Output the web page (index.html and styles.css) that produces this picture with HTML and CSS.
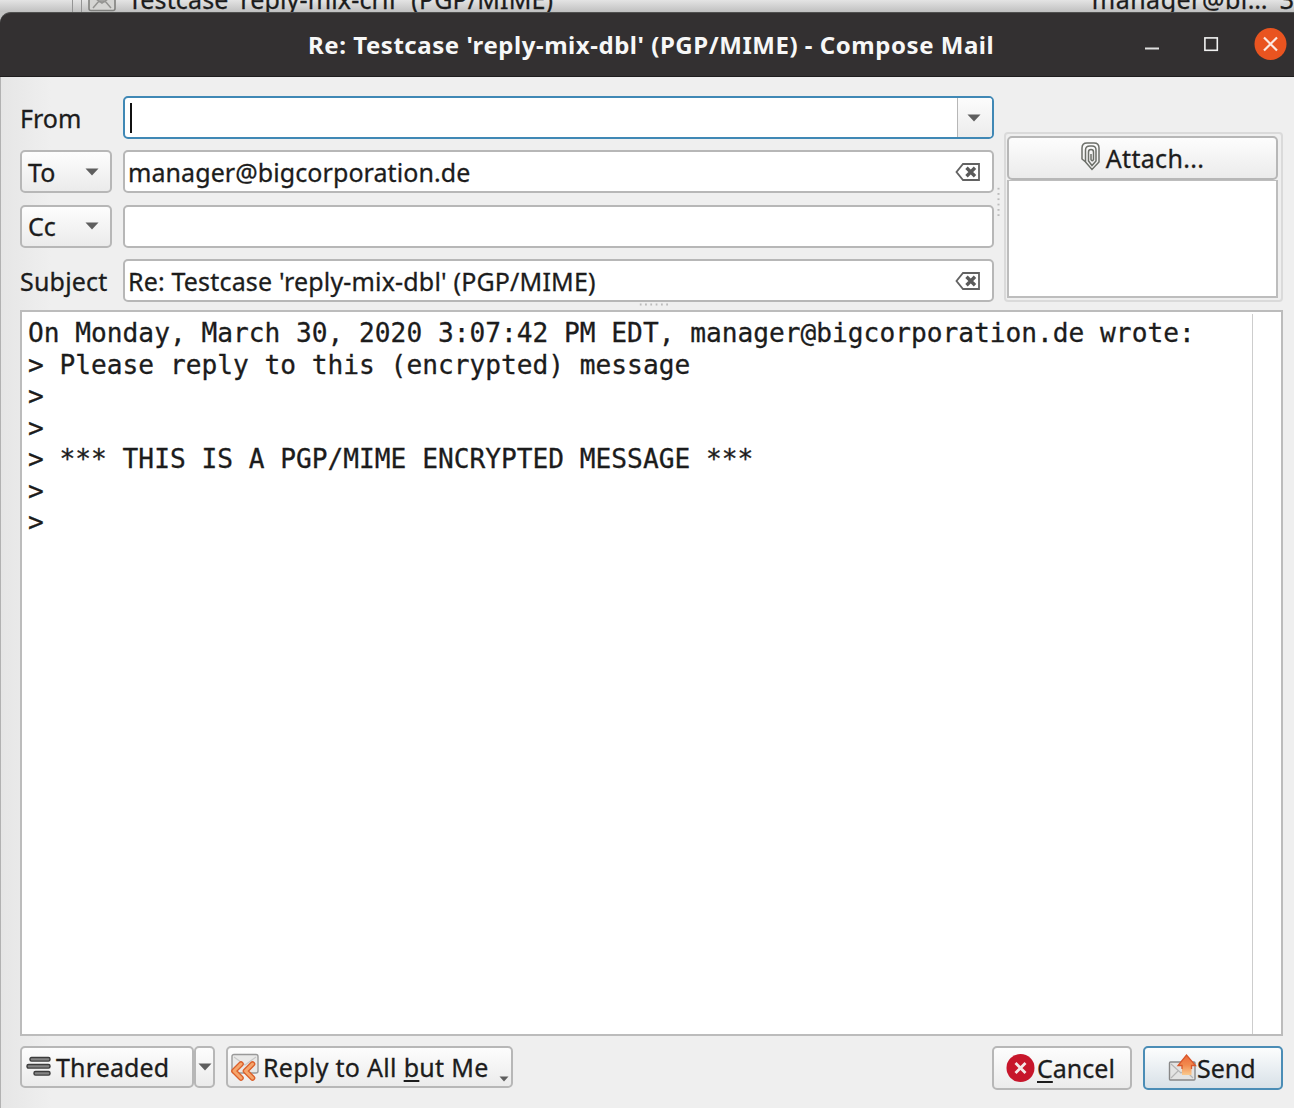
FILE: index.html
```html
<!DOCTYPE html>
<html lang="en">
<head>
<meta charset="utf-8">
<title>Compose Mail</title>
<link rel="stylesheet" href="styles.css">
</head>
<body>
<div class="desktop">
  <div class="backdrop">
    <i class="tree-lines"></i>
    <svg class="mail-icon" width="28" height="12" viewBox="0 0 28 12"><rect x="1" y="-10" width="26" height="20.500" rx="2" fill="#d5d5d3" stroke="#80807e" stroke-width="1.6"/><path d="M5 8 11 1H17L23 8M8 -1 14 3 20 -1" fill="none" stroke="#949492" stroke-width="1.5"/></svg>
    <span class="peek subject-peek">Testcase 'reply-mix-crlf' (PGP/MIME)</span>
    <span class="peek sender-peek">manager@bi…</span>
    <span class="peek date-peek">3</span>
  </div>
  <main class="window">
    <header class="titlebar">
      <h1><span class="title-text">Re: Testcase 'reply-mix-dbl' (PGP/MIME) - Compose Mail</span></h1>
      <div class="controls">
        <svg width="16" height="32" viewBox="0 0 16 32"><path d="M1 19.500H15" stroke="#e0e0e0" stroke-width="2"/></svg>
        <svg width="16" height="32" viewBox="0 0 16 32"><rect x="1.9" y="8.900" width="12.4" height="12.4" fill="none" stroke="#f2f2f2" stroke-width="1.6"/></svg>
        <svg width="33" height="33" viewBox="0 0 33 33"><circle cx="16.5" cy="16" r="16" fill="#e95420"/><path d="m10 9.500 13 13M23 9.500 10 22.500" stroke="#fbe9e2" stroke-width="2.200"/></svg>
      </div>
    </header>
    <section class="headers">
      <div class="fields">
        <label>From</label>
        <div class="field focus"><i class="caret"></i><span class="drop"><svg class="arrow" width="14" height="8" viewBox="0 0 14 8"><path d="M.5.5H13.5L7 7.5Z"/></svg></span></div>
        <button class="btn combo"><span>To</span><svg class="arrow" width="14" height="8" viewBox="0 0 14 8"><path d="M.5.5H13.5L7 7.5Z"/></svg></button>
        <div class="field"><span class="address">manager@bigcorporation.de</span><svg class="clear" width="26" height="18" viewBox="0 0 26 18"><path d="M8 1H24V17H8L1.5 9Z" fill="none" stroke="#626262" stroke-width="1.8"/><path d="m11.5 4.8 8.5 8.5M20 4.8l-8.5 8.5" stroke="#5a5a5a" stroke-width="3.4"/></svg></div>
        <button class="btn combo"><span>Cc</span><svg class="arrow" width="14" height="8" viewBox="0 0 14 8"><path d="M.5.5H13.5L7 7.5Z"/></svg></button>
        <div class="field"></div>
        <label class="subject-label">Subject</label>
        <div class="field"><span class="subject">Re: Testcase 'reply-mix-dbl' (PGP/MIME)</span><svg class="clear" width="26" height="18" viewBox="0 0 26 18"><path d="M8 1H24V17H8L1.5 9Z" fill="none" stroke="#626262" stroke-width="1.8"/><path d="m11.5 4.8 8.5 8.5M20 4.8l-8.5 8.5" stroke="#5a5a5a" stroke-width="3.4"/></svg></div>
      </div>
      <i class="grip-v"></i>
      <aside class="attachments">
        <button class="btn attach">
          <svg width="19" height="29" viewBox="0 0 19 29" fill="none" stroke="#6c6f69" stroke-width="1.5"><path d="M4 19.5 1 17V6Q1 1 6 1H13Q18 1 18 6V20L11 27.5 4.5 20V8Q4.5 4 9 4H11Q15 4 15 8V19L11 23.5 7.5 19V10Q7.5 7.5 10 7.5 12.5 7.5 12.5 10V17.5Q11 20 10 17.5V12"/></svg>
          <span class="attach-text">Attach...</span>
        </button>
        <div class="file-list"></div>
      </aside>
    </section>
    <i class="grip-h"></i>
    <section class="editor">
<pre class="message">On Monday, March 30, 2020 3:07:42 PM EDT, manager@bigcorporation.de wrote:
&gt; Please reply to this (encrypted) message
&gt;
&gt;
&gt; *** THIS IS A PGP/MIME ENCRYPTED MESSAGE ***
&gt;
&gt;</pre>
      <i class="scroll-track"></i>
    </section>
    <footer class="actions">
      <button class="btn threaded">
        <svg width="26" height="22" viewBox="0 0 26 22"><g fill="#858585" stroke="#3c3c3c" stroke-width="1.4"><rect x="4" y="1.500" width="20" height="3.600" rx="1.500"/><rect x="1" y="8.500" width="23" height="3.600" rx="1.500"/><rect x="8" y="15.500" width="16" height="3.600" rx="1.500"/></g></svg>
        <span class="threaded-text">Threaded</span>
      </button>
      <button class="btn split"><svg class="arrow" width="14" height="8" viewBox="0 0 14 8"><path d="M.5.5H13.5L7 7.5Z"/></svg></button>
      <button class="btn reply">
        <svg width="30" height="28" viewBox="0 0 30 28"><rect x="2" y="1.500" width="26" height="18.500" rx="2" fill="#e9e9e8" stroke="#999" stroke-width="1.400"/><path d="m4 4 11 8L26 4" fill="none" stroke="#c8c8c8" stroke-width="1.200"/><g fill="none" stroke-linecap="round" stroke-linejoin="round"><path d="m11 11-7 7 7 7M22.500 11l-7 7 7 7" stroke="#dc5f2a" stroke-width="5.600"/><path d="m11 11-7 7 7 7M22.500 11l-7 7 7 7" stroke="#f5a56c" stroke-width="3"/></g></svg>
        <span class="reply-text">Reply to All <u>b</u>ut Me</span>
        <svg class="mini" width="10" height="6" viewBox="0 0 10 6"><path d="M.5.5H9.500L5 5.500Z"/></svg>
      </button>
      <i class="spacer"></i>
      <button class="btn cancel">
        <svg width="29" height="29" viewBox="0 0 29 29"><circle cx="14.5" cy="14" r="14" fill="#c7162b"/><path d="m9.500 9 10 10m0-10-10 10" stroke="#f4e8e8" stroke-width="2.800"/></svg>
        <span class="cancel-text"><u>C</u>ancel</span>
      </button>
      <button class="btn send">
        <svg width="29" height="28" viewBox="0 0 29 28"><defs><linearGradient id="lift" x2="0" y2="1"><stop stop-color="#ec6b3b"/><stop offset=".5" stop-color="#f28a4e"/><stop offset="1" stop-color="#f9c98e"/></linearGradient></defs><rect x="1.500" y="8" width="25.500" height="18" rx="1" fill="#e3e3e2" stroke="#888" stroke-width="1.400"/><path d="m3 10 10 9 12-9M3 24l7-7m15 7-7-7" fill="none" stroke="#b5b5b5" stroke-width="1.200"/><path d="M18.500 1 27.500 11.500H23.500V21H14V11.500H10Z" fill="url(#lift)"/><path d="M14 15V11.500H10L18.500 1 27.500 11.500H23.500V15" fill="none" stroke="#d9572b" stroke-width="1.300"/></svg>
        <span>Send</span>
      </button>
    </footer>
  </main>
</div>
</body>
</html>
```
FILE: styles.css
```css
* { box-sizing: border-box; }
body { margin: 0; overflow: hidden; color: #1c1c1c; font: 25px/30px "Noto Sans", sans-serif; -webkit-text-stroke: .3px; }
i { font-style: normal; }
svg { display: block; flex: none; overflow: hidden; }
span { white-space: nowrap; }
.desktop { width: 1294px; height: 1108px; display: flex; flex-direction: column; background: #c4c4c4; }
.backdrop { height: 12px; display: flex; overflow: hidden; background: linear-gradient(#e4e4e4, #c0c0c0); }
.tree-lines { width: 10px; margin-left: 72px; border: solid #949494; border-width: 0 1px; }
.mail-icon { margin-left: 6px; }
.peek { line-height: 30px; margin-top: -16px; }
.subject-peek { margin-left: 12px; width: 964px; letter-spacing: .15px; }
.sender-peek { width: 188px; letter-spacing: .5px; }
.window { flex: 1; display: flex; flex-direction: column; background: linear-gradient(90deg, #e6e6e6, #efefef 50px); border-left: 1px solid #b2b2b2; border-radius: 12px 12px 0 0; }
.titlebar { height: 65px; display: flex; align-items: center; background: #333031; border-bottom: 1px solid #1f1d1e; border-radius: 11px 0 0 0; margin-left: -1px; border-top: 1px solid #50504f; color: #f7f7f7; }
h1 { margin: 0 0 0 308px; width: 836px; font-size: 24px; line-height: 30px; font-weight: 700; letter-spacing: .54px; -webkit-text-stroke: 0; }
.controls { display: flex; align-items: center; }
.controls svg:nth-child(2) { margin-left: 43px; }
.controls svg:nth-child(3) { margin-left: 35px; }
.headers { display: flex; height: 226px; padding: 19px 11px 0 19px; }
.fields { width: 974px; display: grid; grid-template-columns: 92px 871px; grid-template-rows: repeat(4, 43px); gap: 11.4px 11px; align-items: center; }
.field { height: 43px; border: 2px solid #b7b7b7; border-radius: 5px; background: #fff; display: flex; align-items: center; justify-content: space-between; padding: 0 11px 0 3px; }
.focus { border-color: #4088b5; padding: 0; }
.address { letter-spacing: .08px; }
.subject { letter-spacing: .17px; }
.subject-label { letter-spacing: .2px; }
.caret { width: 2px; height: 30px; margin-left: 5px; background: #111; }
.drop { width: 35px; align-self: stretch; border-left: 1px solid #b7b7b7; border-radius: 0 3px 3px 0; background: linear-gradient(#fcfcfc, #ececec); display: flex; align-items: center; justify-content: center; padding-right: 2px; }
.arrow, .mini { fill: #5e5e5e; }
.btn { font: inherit; color: inherit; margin: 0; padding: 0; height: 43px; border: 2px solid #b7b7b7; border-radius: 5px; background: linear-gradient(#fdfdfd, #ebebeb); display: flex; align-items: center; }
.combo { width: 92px; justify-content: space-between; padding: 0 11px 0 6px; }
.grip-v { width: 3px; height: 30px; margin: 90px 4px 0 3px; background: radial-gradient(circle, #bbb 1px, transparent 1.2px) 0 0 / 3px 5.3px; }
.attachments { width: 280px; height: 170px; margin-top: 36px; padding: 2px 3px 2px 1px; border: 2px solid #dadada; border-radius: 4px; display: flex; flex-direction: column; align-items: stretch; }
.attach { justify-content: center; gap: 6px; height: 44px; }
.attach svg { margin-top: -4px; }
.attach-text { letter-spacing: .3px; }
.file-list { flex: 1; border: 2px solid #bdbdbd; border-top-width: 1px; background: #fff; }
.grip-h { width: 30px; height: 3px; margin: 0 0 4px 637px; background: radial-gradient(circle, #bbb 1px, transparent 1.2px) 0 0 / 5.3px 3px; }
.editor { height: 726px; margin: 0 11px 0 19px; background: #fff; border: 2px solid #bcbcbc; display: flex; justify-content: space-between; }
.message { margin: 6px 0 0 6px; font: 26.2px/31.55px "DejaVu Sans Mono", monospace; color: #1c1c1c; }
.scroll-track { width: 29px; margin-top: 2px; border-left: 1px solid #cdcdcd; }
.actions { display: flex; padding: 10px 11px 0 19px; align-items: flex-start; }
.actions .btn { height: 42px; }
.threaded { width: 174px; padding-left: 4px; gap: 4px; }
.threaded-text { letter-spacing: .15px; }
.split { width: 21px; justify-content: center; }
.reply { width: 287px; margin-left: 11px; padding-left: 2px; gap: 3px; position: relative; }
.reply-text { letter-spacing: .3px; }
.mini { position: absolute; right: 2px; bottom: 4px; }
.spacer { flex: 1; }
.actions .cancel, .actions .send { width: 140px; height: 44px; }
.cancel { padding-left: 12px; gap: 2px; }
.actions .send { margin-left: 11px; padding-left: 23px; border-color: #4b8db6; background: linear-gradient(#fcfdfd, #d8e1e8); }
u { text-decoration-thickness: 2px; text-underline-offset: 3px; text-decoration-skip-ink: none; }
```
